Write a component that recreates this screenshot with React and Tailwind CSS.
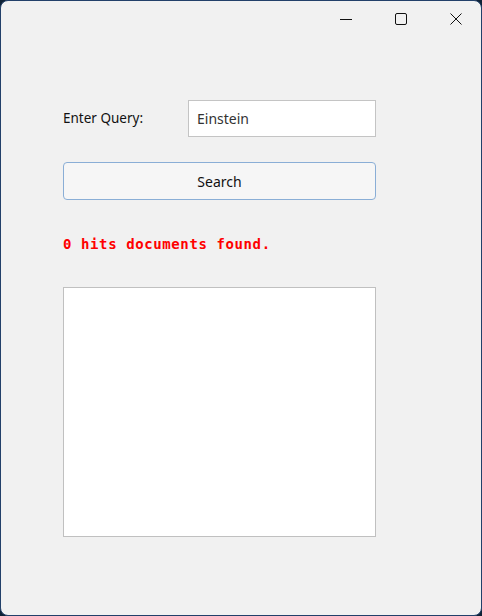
import React, { useState } from "react";

const App = () => {
  const [query, setQuery] = useState("Einstein");

  return (
    <div className="w-[482px] h-[616px] bg-[#0f2236]">
      <div
        className="w-full h-full bg-[#f1f1f1] border border-[#22406a] rounded-[8px] flex flex-col"
        style={{ fontFamily: "'Noto Sans', 'Open Sans', sans-serif" }}
      >
        {/* title bar */}
        <div className="h-[35px] flex justify-end items-center shrink-0 mr-[-2px]">
          <button className="w-[55px] h-[35px] flex items-center justify-center">
            <svg width="12" height="12" viewBox="0 0 12 12">
              <path d="M0 6.5h12" stroke="#111" strokeWidth="1" />
            </svg>
          </button>
          <button className="w-[55px] h-[35px] flex items-center justify-center">
            <svg width="12" height="12" viewBox="0 0 12 12">
              <rect x="0.5" y="0.5" width="11" height="11" rx="1.5" fill="none" stroke="#111" strokeWidth="1" />
            </svg>
          </button>
          <button className="w-[55px] h-[35px] flex items-center justify-center">
            <svg width="12" height="12" viewBox="0 0 12 12">
              <path d="M0.5 0.5l11 11M11.5 0.5l-11 11" stroke="#111" strokeWidth="1" />
            </svg>
          </button>
        </div>

        <div className="pl-[62px] pt-[64px] w-[375px] flex flex-col">
          <div className="flex items-center h-[37px]">
            <span className="w-[125px] text-[13.5px] text-[#111]">Enter Query:</span>
            <input
              value={query}
              onChange={(e) => setQuery(e.target.value)}
              className="w-[188px] h-[37px] bg-white border border-[#c4c4c4] px-[8px] text-[14px] text-[#333] outline-none"
            />
          </div>

          <button className="mt-[25px] w-[313px] h-[38px] bg-[#f6f6f6] border border-[#8aaed6] rounded-[4px] text-[14px] text-[#111]">
            Search
          </button>

          <div
            className="mt-[34px] text-[14px] font-bold text-[#ff0000] tracking-[0.6px] leading-[20px]"
            style={{ fontFamily: "'DejaVu Sans Mono', 'Liberation Mono', monospace" }}
          >
            0 hits documents found.
          </div>

          <div className="mt-[33px] w-[313px] h-[250px] bg-white border border-[#c0c0c0]" />
        </div>
      </div>
    </div>
  );
};

export default App;
